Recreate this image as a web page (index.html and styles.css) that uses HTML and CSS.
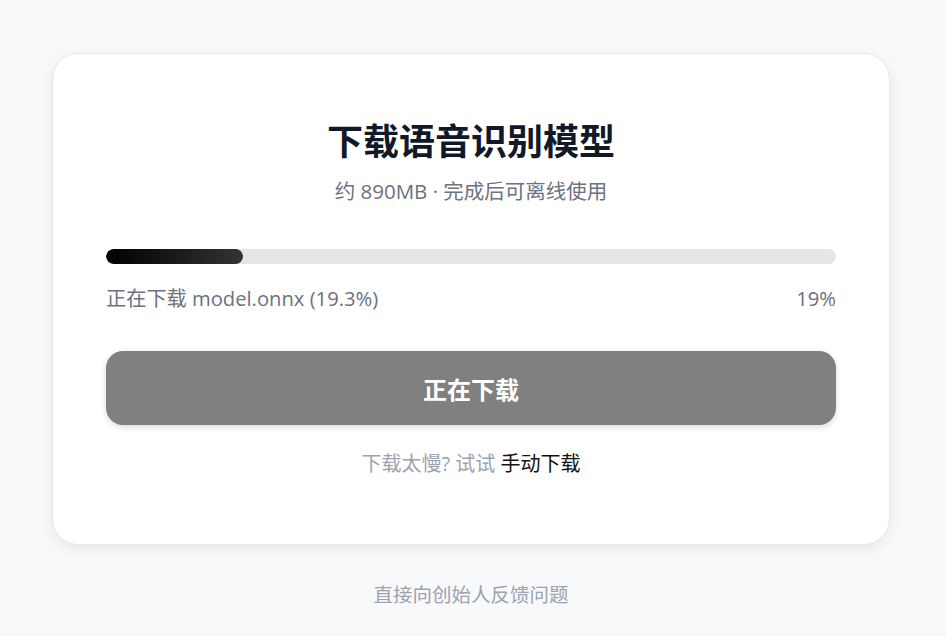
FILE: index.html
```html
<!DOCTYPE html>
<html lang="zh-CN">
<head>
<meta charset="utf-8">
<title>下载语音识别模型</title>
<link rel="stylesheet" href="styles.css">
</head>
<body>
<main class="page">
  <section class="card">
    <h1 class="title">下载语音识别模型</h1>
    <p class="subtitle">约 890MB · 完成后可离线使用</p>
    <div class="progress"><div class="progress-fill" style="width: 18.7%"></div></div>
    <div class="status">
      <span>正在下载 model.onnx (19.3%)</span>
      <span>19%</span>
    </div>
    <button class="btn" type="button" disabled>正在下载</button>
    <p class="hint">下载太慢? 试试 <a class="hint-link" href="#">手动下载</a></p>
  </section>
  <p class="feedback">直接向创始人反馈问题</p>
</main>
</body>
</html>
```
FILE: styles.css
```css
* { box-sizing: border-box; }
html, body { margin: 0; padding: 0; }
body {
  background: #f8f9fb;
  font-family: "Open Sans", "Noto Sans CJK SC", sans-serif;
  color: #111827;
  padding-right: 4px;
}
.page {
  width: 838px;
  margin: 53px auto 0;
  display: flex;
  flex-direction: column;
  align-items: stretch;
}
.card {
  background: #fff;
  border: 1px solid #e5e7eb;
  border-radius: 26px;
  box-shadow: 0 4px 14px rgba(0, 0, 0, 0.08);
  padding: 66px 53px 65px;
  display: flex;
  flex-direction: column;
}
.title {
  margin: 0;
  text-align: center;
  font-size: 36px;
  line-height: 44px;
  font-weight: 700;
  color: #111827;
}
.subtitle {
  margin: 13px 0 0;
  text-align: center;
  font-size: 20.5px;
  line-height: 28px;
  color: #6b7280;
}
.progress {
  margin-top: 44px;
  height: 15px;
  border-radius: 8px;
  background: #e5e5ea;
  overflow: hidden;
}
.progress-fill {
  height: 100%;
  border-radius: 8px;
  background: linear-gradient(90deg, #000 0%, #333 100%);
}
.status {
  margin-top: 20px;
  display: flex;
  justify-content: space-between;
  font-size: 20.2px;
  line-height: 28px;
  color: #6b7280;
}
.btn {
  margin-top: 39px;
  height: 74px;
  border: none;
  border-radius: 17px;
  background: #808080;
  color: #fff;
  font-family: inherit;
  font-size: 24px;
  font-weight: 700;
  box-shadow: 0 2px 6px rgba(0, 0, 0, 0.15);
}
.hint {
  margin: 24px 0 0;
  text-align: center;
  font-size: 20px;
  line-height: 30px;
  color: #9ca3af;
}
.hint-link {
  color: #111;
  text-decoration: none;
}
.feedback {
  margin: 36px 0 0;
  text-align: center;
  font-size: 19.5px;
  line-height: 28px;
  color: #9ca3af;
}
```
